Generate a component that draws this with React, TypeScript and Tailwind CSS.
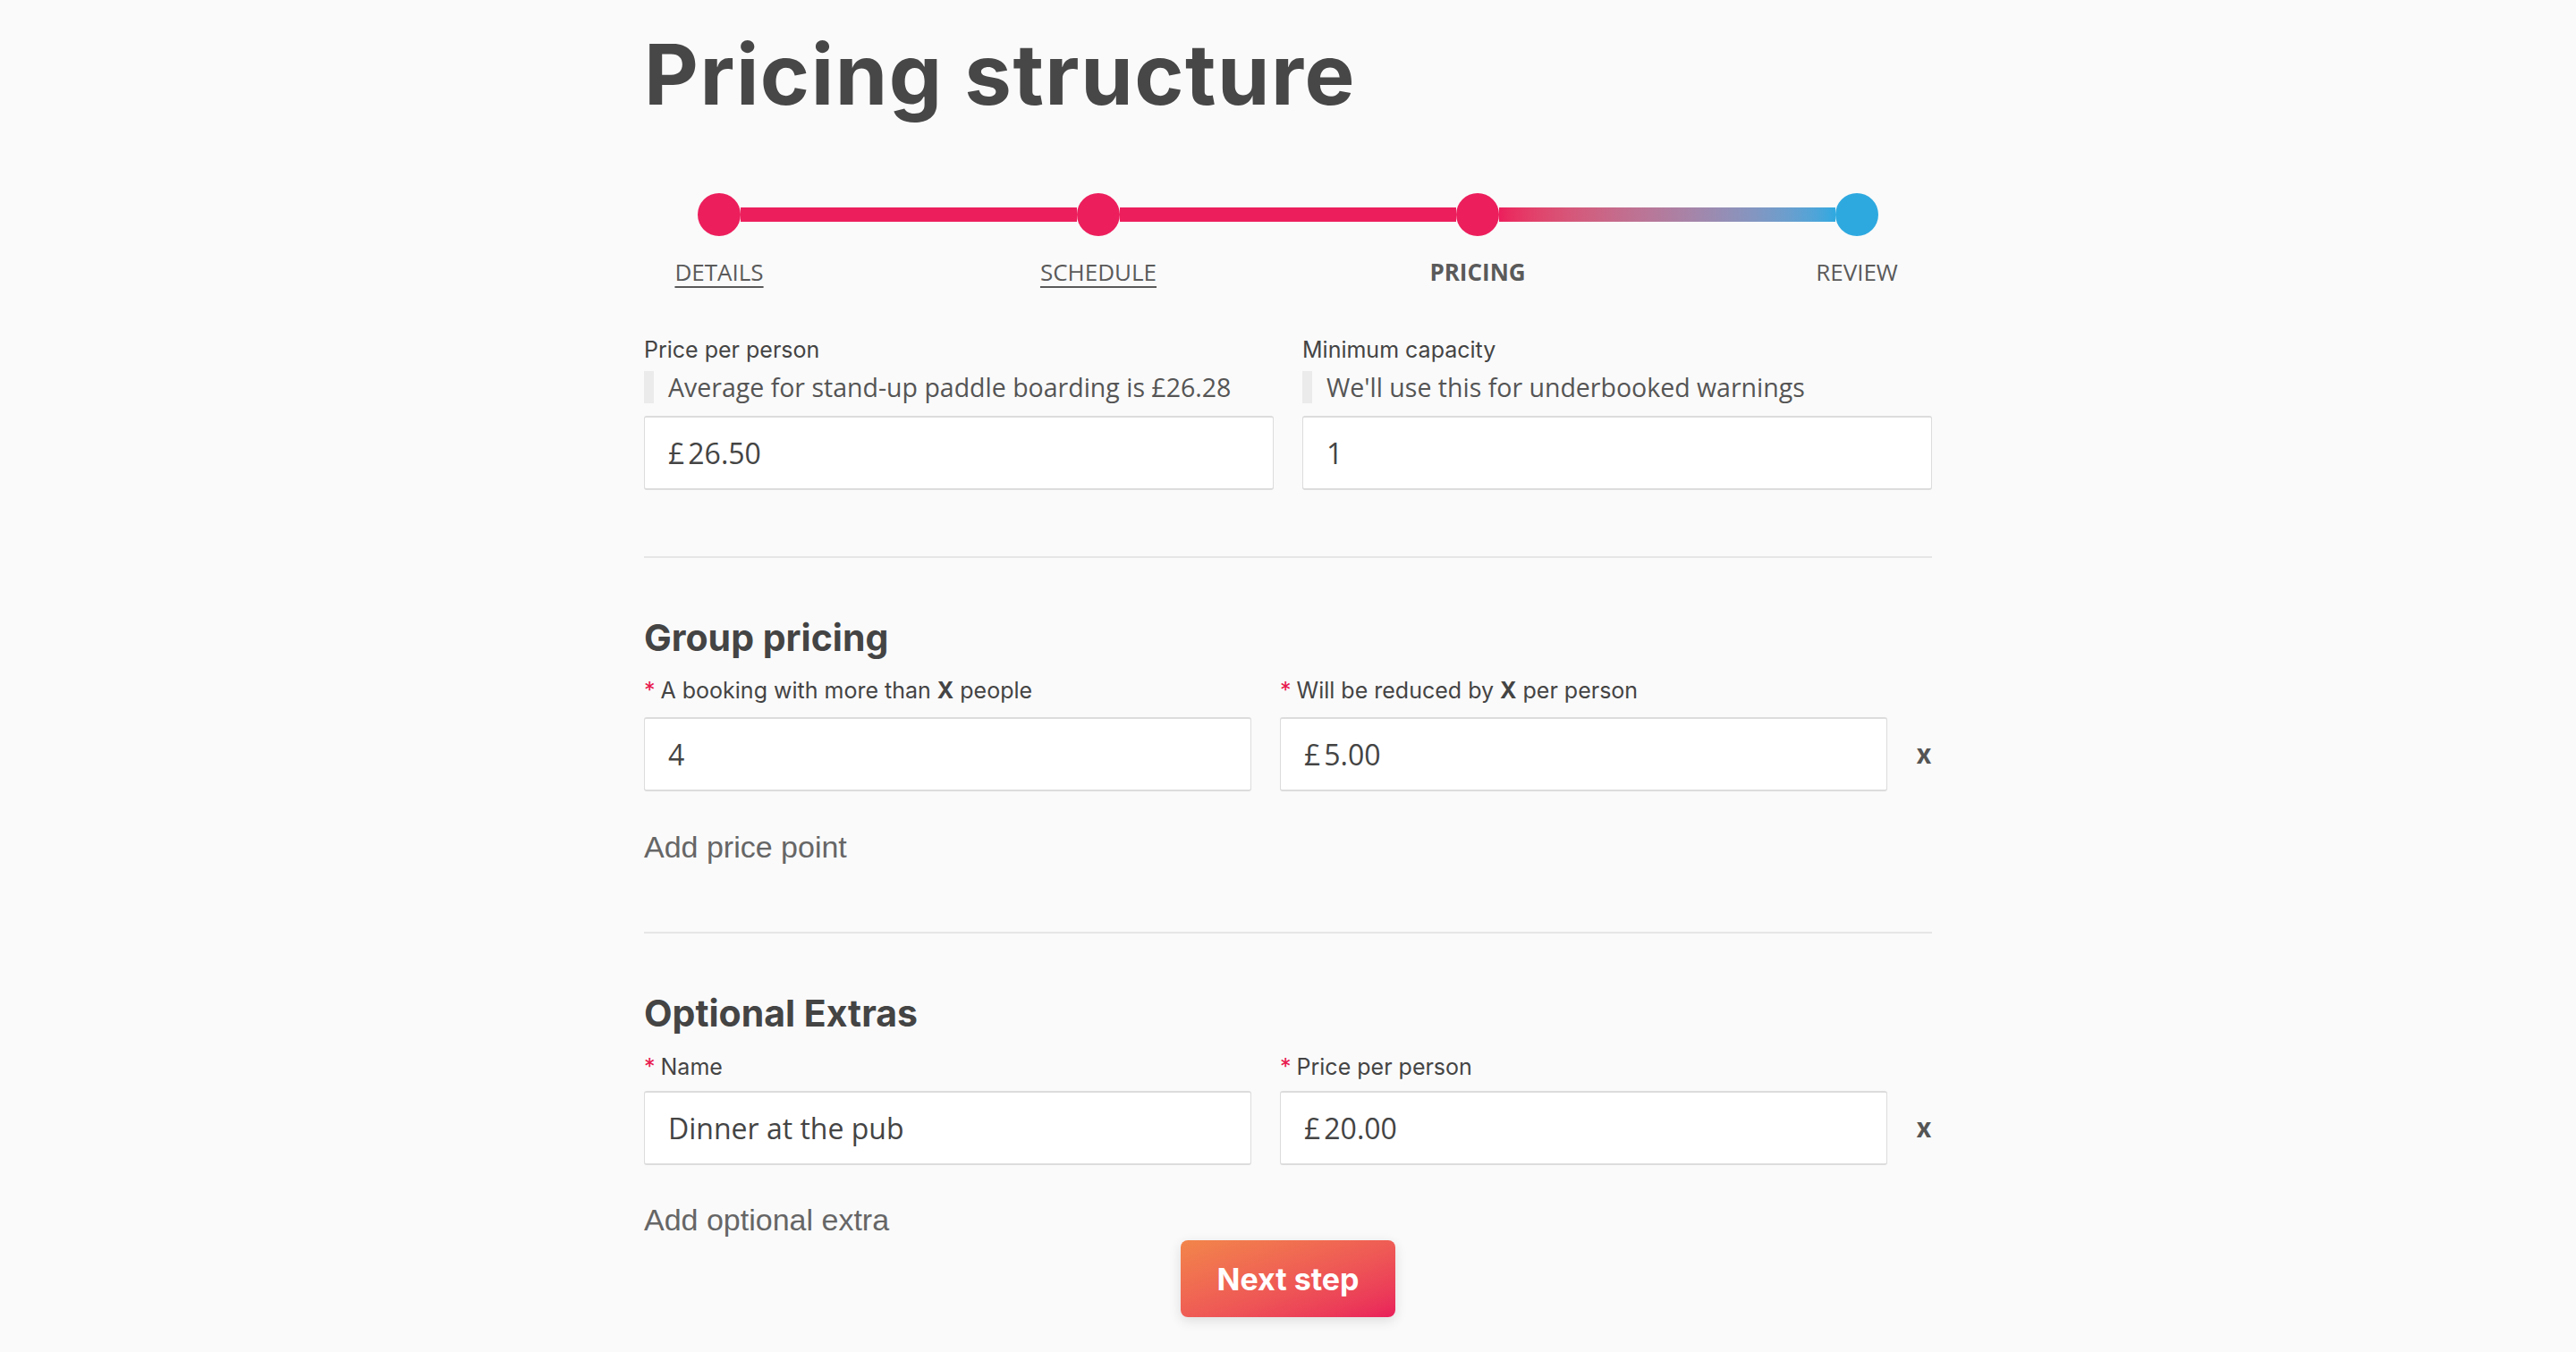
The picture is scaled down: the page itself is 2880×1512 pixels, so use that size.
import React from 'react';

const heading = { fontFamily: 'Inter, "Noto Sans", sans-serif' };
const body = { fontFamily: '"Open Sans", "Noto Sans", sans-serif' };

const steps = [
  { label: 'DETAILS', style: 'underline' },
  { label: 'SCHEDULE', style: 'underline' },
  { label: 'PRICING', style: 'font-bold' },
  { label: 'REVIEW', style: '' },
];

function Stepper() {
  return (
    <div className="px-[60px]">
      <div className="flex items-center">
        <div className="w-12 h-12 rounded-full bg-[#ec1e5c]" />
        <div className="flex-1 h-4 bg-[#ec1e5c]" />
        <div className="w-12 h-12 rounded-full bg-[#ec1e5c]" />
        <div className="flex-1 h-4 bg-[#ec1e5c]" />
        <div className="w-12 h-12 rounded-full bg-[#ec1e5c]" />
        <div className="flex-1 h-4 bg-linear-to-r from-[#ec1e5c] to-[#2ea9e0]" />
        <div className="w-12 h-12 rounded-full bg-[#2ea9e0]" />
      </div>
      <div className="flex justify-between mt-[24px]" style={body}>
        {steps.map(s => (
          <div key={s.label} className="w-12 flex justify-center">
            <span className={`whitespace-nowrap text-[26px] leading-[32px] text-[#5a5a5a] underline-offset-[6px] ${s.style === 'underline' ? 'underline' : ''} ${s.style === 'font-bold' ? 'font-bold' : ''}`}>
              {s.label}
            </span>
          </div>
        ))}
      </div>
    </div>
  );
}

function Label({ children, required }: { children: React.ReactNode; required?: boolean }) {
  return (
    <div className="text-[25px] leading-[28px] text-[#444]" style={heading}>
      {required && <span className="text-[#e8194f] mr-[6px]">*</span>}
      {children}
    </div>
  );
}

function Input({ value, prefix }: { value: string; prefix?: string }) {
  return (
    <div className="h-[83px] bg-white border border-[#dcdcdc] border-y-2 rounded-[3px] flex items-center px-[26px] text-[32px] text-[#444]" style={body}>
      {prefix && <span className="mr-[4px]">{prefix}</span>}
      <span>{value}</span>
    </div>
  );
}

function Hint({ children }: { children: React.ReactNode }) {
  return (
    <div className="flex items-stretch h-[36px] mt-[10px] mb-[14px]">
      <div className="w-[11px] bg-[#ebebeb]" />
      <div className="pl-[16px] text-[28.5px] leading-[36px] text-[#555]" style={body}>{children}</div>
    </div>
  );
}

function RemoveX() {
  return (
    <div className="w-[18px] flex items-center justify-center text-[30px] font-bold text-[#555]" style={heading}>x</div>
  );
}

export default function App() {
  return (
    <div className="min-h-[1512px] bg-[#fafafa]">
      <div className="w-[1440px] mx-auto">
        <h1 className="pt-[26px] text-[94px] leading-[114px] font-bold text-[#474747] tracking-[1.5px]" style={heading}>
          Pricing structure
        </h1>

        <div className="mt-[76px]">
          <Stepper />
        </div>

        <div className="grid grid-cols-2 gap-[32px] mt-[57px]">
          <div>
            <Label>Price per person</Label>
            <Hint>Average for stand-up paddle boarding is £26.28</Hint>
            <Input prefix="£" value="26.50" />
          </div>
          <div>
            <Label>Minimum capacity</Label>
            <Hint>We'll use this for underbooked warnings</Hint>
            <Input value="1" />
          </div>
        </div>

        <div className="h-[2px] bg-[#e6e6e6] mt-[74px]" />

        <h2 className="mt-[64px] text-[41px] leading-[50px] font-bold text-[#444]" style={heading}>Group pricing</h2>
        <div className="grid grid-cols-[1fr_1fr_auto] gap-x-[32px] mt-[20px]">
          <Label required>A booking with more than <b>X</b> people</Label>
          <Label required>Will be reduced by <b>X</b> per person</Label>
          <div />
          <div className="mt-[16px]"><Input value="4" /></div>
          <div className="mt-[16px]"><Input prefix="£" value="5.00" /></div>
          <div className="mt-[16px] flex"><RemoveX /></div>
        </div>
        <div className="mt-[42px] text-[34px] leading-[40px] text-[#666]" style={{ fontFamily: '"Liberation Sans", Arial, sans-serif' }}>
          Add price point
        </div>

        <div className="h-[2px] bg-[#e6e6e6] mt-[75px]" />

        <h2 className="mt-[64px] text-[41px] leading-[50px] font-bold text-[#444]" style={heading}>Optional Extras</h2>
        <div className="grid grid-cols-[1fr_1fr_auto] gap-x-[32px] mt-[21px]">
          <Label required>Name</Label>
          <Label required>Price per person</Label>
          <div />
          <div className="mt-[13px]"><Input value="Dinner at the pub" /></div>
          <div className="mt-[13px]"><Input prefix="£" value="20.00" /></div>
          <div className="mt-[13px] flex"><RemoveX /></div>
        </div>
        <div className="mt-[41px] text-[34px] leading-[40px] text-[#666]" style={{ fontFamily: '"Liberation Sans", Arial, sans-serif' }}>
          Add optional extra
        </div>

        <div className="flex justify-center mt-[3px]">
          <button className="w-[240px] h-[86px] rounded-[8px] bg-linear-to-br from-[#f2854a] to-[#e91e5a] text-white text-[34px] font-bold shadow-[0_4px_14px_rgba(0,0,0,0.12)]" style={heading}>
            Next step
          </button>
        </div>
      </div>
    </div>
  );
}
